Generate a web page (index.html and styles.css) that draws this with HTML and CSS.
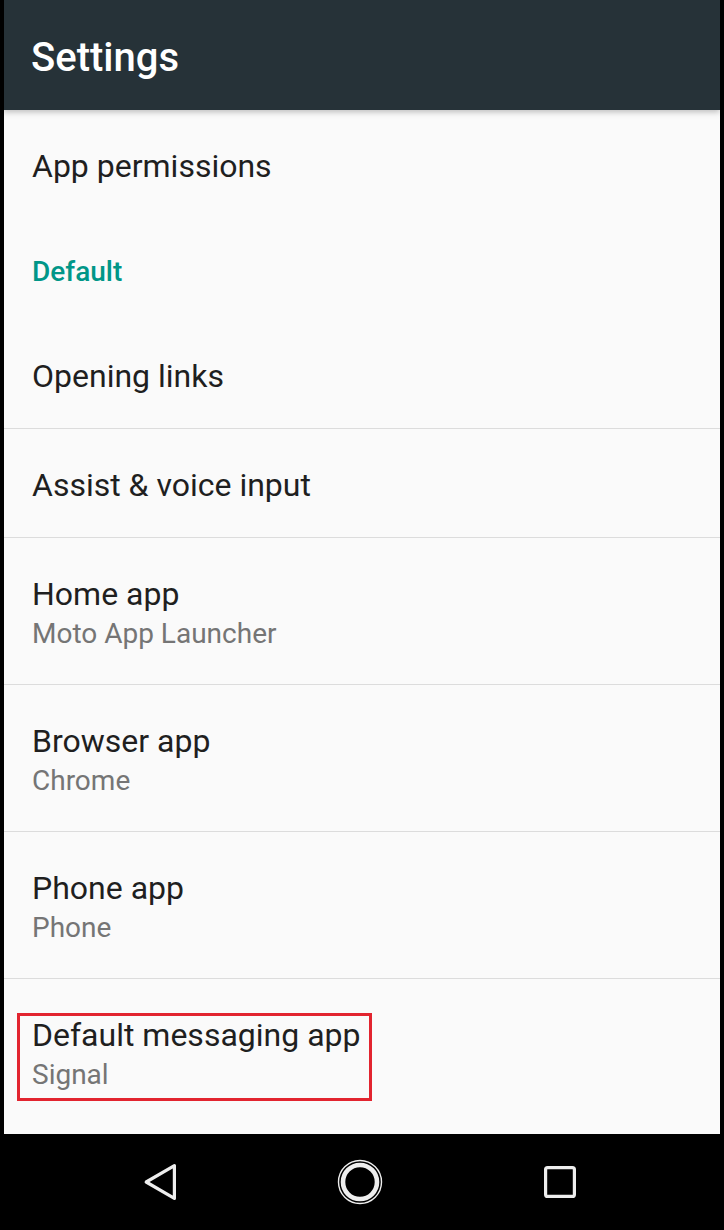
FILE: index.html
```html
<!DOCTYPE html>
<html lang="en">
<head>
  <meta charset="UTF-8" />
  <meta name="viewport" content="width=device-width, initial-scale=1.0" />
  <title>Settings</title>
  <link rel="stylesheet" href="styles.css">
</head>
<body>
  <div class="phone">
    <div class="screen">
      <header class="toolbar">
        <h1>Settings</h1>
      </header>

      <div class="list">
        <div class="item first">
          <div class="title">App permissions</div>
        </div>

        <div class="category">Default</div>

        <div class="item">
          <div class="title">Opening links</div>
        </div>
        <div class="item">
          <div class="title">Assist &amp; voice input</div>
        </div>
        <div class="item two-line">
          <div class="title">Home app</div>
          <div class="summary">Moto App Launcher</div>
        </div>
        <div class="item two-line">
          <div class="title">Browser app</div>
          <div class="summary">Chrome</div>
        </div>
        <div class="item two-line">
          <div class="title">Phone app</div>
          <div class="summary">Phone</div>
        </div>
        <div class="item two-line last">
          <div class="title">Default messaging app</div>
          <div class="summary">Signal</div>
          <div class="highlight"></div>
        </div>
      </div>
    </div>

    <nav class="navbar">
      <!-- back -->
      <svg class="nav-icon" width="48" height="48" viewBox="0 0 48 48">
        <path d="M38.4 7.6 L38.4 40.4 L10.2 24 Z" fill="none" stroke="#eeeeee" stroke-width="3.2" stroke-linejoin="round" />
      </svg>
      <!-- home -->
      <svg class="nav-icon" width="48" height="48" viewBox="0 0 48 48">
        <circle cx="24" cy="24" r="21.5" fill="none" stroke="#eeeeee" stroke-width="1.4" />
        <circle cx="24" cy="24" r="17" fill="none" stroke="#eeeeee" stroke-width="4.6" />
      </svg>
      <!-- recents -->
      <svg class="nav-icon" width="48" height="48" viewBox="0 0 48 48">
        <rect x="9.6" y="9.6" width="28.8" height="28.8" rx="2" fill="none" stroke="#eeeeee" stroke-width="3.2" />
      </svg>
    </nav>
  </div>
</body>
</html>
```

FILE: styles.css
```css
:root {
  --frame: #000000;
  --toolbar: #263238;
  --bg: #fafafa;
  --text: #1f1f1f;
  --muted: #757575;
  --accent: #009688;
  --divider: #dcdcdc;
  --mark: #e2242f;
}

body {
  margin: 0;
  background: var(--frame);
  font-family: Roboto, 'Noto Sans', Arial, sans-serif;
}

.phone {
  width: 724px;
  height: 1230px;
  background: var(--frame);
  overflow: hidden;
}

.screen {
  width: 716px;
  height: 1134px;
  margin-left: 4px;
  background: var(--bg);
  overflow: hidden;
}

.toolbar {
  position: relative;
  z-index: 1;
  height: 110px;
  box-sizing: border-box;
  margin-left: -1px;
  background: var(--toolbar);
  box-shadow: 0 2px 6px rgba(0, 0, 0, 0.25);
  display: flex;
  align-items: center;
  padding: 6px 0 0 28px;
}

.toolbar h1 {
  margin: 0;
  color: #ffffff;
  font-size: 40px;
  font-weight: 500;
  line-height: 1;
}

.item {
  position: relative;
  box-sizing: border-box;
  height: 109px;
  padding: 36px 28px 0;
  border-bottom: 1px solid var(--divider);
}

.item.first {
  border-bottom: none;
}

.item.two-line {
  height: 147px;
}

.item.last {
  border-bottom: none;
}

.title {
  color: var(--text);
  font-size: 32px;
  line-height: 40px;
}

.summary {
  color: var(--muted);
  font-size: 28px;
  line-height: 40px;
}

.category {
  box-sizing: border-box;
  height: 101px;
  padding: 37px 28px 0;
  color: var(--accent);
  font-size: 28px;
  font-weight: 500;
  line-height: 32px;
}

.highlight {
  position: absolute;
  left: 13px;
  top: 34px;
  width: 355px;
  height: 88px;
  box-sizing: border-box;
  border: 3px solid var(--mark);
}

.navbar {
  height: 96px;
  display: flex;
  align-items: center;
  gap: 152px;
  padding-left: 136px;
}

.nav-icon {
  display: block;
}
```
